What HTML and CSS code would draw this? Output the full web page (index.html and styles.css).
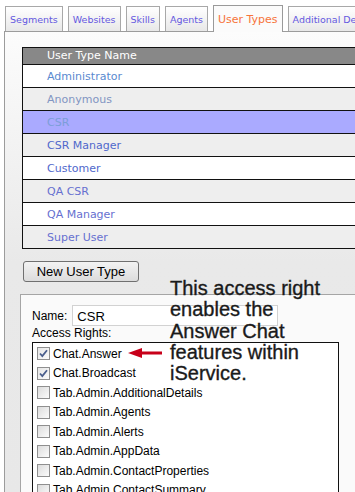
FILE: index.html
```html
<!DOCTYPE html>
<html>
<head>
<meta charset="utf-8">
<link rel="stylesheet" href="styles.css">
</head>
<body>
<div class="page">
  <ul class="tabs">
    <li class="tab">Segments</li>
    <li class="tab">Websites</li>
    <li class="tab">Skills</li>
    <li class="tab">Agents</li>
    <li class="tab tab-active">User Types</li>
    <li class="tab">Additional Details</li>
  </ul>
  <div class="panel">
    <div class="grid">
      <div class="grid-head">User Type Name</div>
      <div class="grid-row row-light"><span class="lnk lnk-a">Administrator</span></div>
      <div class="grid-row row-alt"><span class="lnk lnk-b">Anonymous</span></div>
      <div class="grid-row row-sel"><span class="lnk lnk-c">CSR</span></div>
      <div class="grid-row row-alt"><span class="lnk">CSR Manager</span></div>
      <div class="grid-row row-light"><span class="lnk">Customer</span></div>
      <div class="grid-row row-alt"><span class="lnk lnk-d">QA CSR</span></div>
      <div class="grid-row row-light"><span class="lnk lnk-d">QA Manager</span></div>
      <div class="grid-row row-alt row-last"><span class="lnk lnk-d">Super User</span></div>
    </div>
    <button class="btn">New User Type</button>
    <div class="editor">
      <div class="name-row">
        <label class="field-label">Name:</label>
        <input class="name-input" type="text" value="CSR">
      </div>
      <div class="field-label rights-label">Access Rights:</div>
      <ul class="rights">
        <li class="right"><span class="cb cb-on"><svg viewBox="0 0 11 11" width="11" height="11"><path d="M2 5.5 L4.3 8 L9 2.2" fill="none" stroke="#4a5e8c" stroke-width="1.8"/></svg></span>Chat.Answer</li>
        <li class="right"><span class="cb cb-on"><svg viewBox="0 0 11 11" width="11" height="11"><path d="M2 5.5 L4.3 8 L9 2.2" fill="none" stroke="#4a5e8c" stroke-width="1.8"/></svg></span>Chat.Broadcast</li>
        <li class="right"><span class="cb"></span>Tab.Admin.AdditionalDetails</li>
        <li class="right"><span class="cb"></span>Tab.Admin.Agents</li>
        <li class="right"><span class="cb"></span>Tab.Admin.Alerts</li>
        <li class="right"><span class="cb"></span>Tab.Admin.AppData</li>
        <li class="right"><span class="cb"></span>Tab.Admin.ContactProperties</li>
        <li class="right"><span class="cb"></span>Tab.Admin.ContactSummary</li>
      </ul>
    </div>
  </div>
  <div class="callout">This access right enables the Answer Chat features within iService.</div>
  <svg class="arrow" viewBox="0 0 36 12" width="36" height="12"><polygon points="1,6 15,1 15,11" fill="#c8001a"/><rect x="14" y="4.5" width="21" height="3" fill="#c8001a"/></svg>
</div>
</body>
</html>
```

FILE: styles.css
```css
html, body {
  margin: 0;
  padding: 0;
  background: #ffffff;
  overflow: hidden;
}
.page {
  position: relative;
  width: 355px;
  height: 492px;
  overflow: hidden;
  padding-left: 4px;
  box-sizing: border-box;
  font-family: "Liberation Sans", Arial, sans-serif;
}
.tabs {
  list-style: none;
  margin: 5px 0 0 0;
  padding: 0 0 0 1px;
  display: flex;
  align-items: flex-end;
  gap: 5px;
  width: 500px;
}
.tab {
  box-sizing: border-box;
  height: 25px;
  padding: 0 4px;
  border: 1px solid #a8a8a8;
  border-bottom: none;
  background: linear-gradient(#ffffff, #e8e8e8);
  font-family: "DejaVu Sans", Verdana, sans-serif;
  font-size: 9.5px;
  color: #6458e0;
  display: flex;
  align-items: center;
  white-space: nowrap;
}
.tab-active {
  position: relative;
  z-index: 1;
  height: 27px;
  margin-bottom: -1px;
  background: #fbfbfb;
  border-color: #9a9a9a;
  font-size: 11px;
  color: #f7743a;
}
.panel {
  border-top: 1px solid #9c9c9c;
  border-left: 1px solid #9c9c9c;
  width: 420px;
  height: 470px;
  background: linear-gradient(#fcfcfc 0, #e9e9e9 230px, #e8e8e8 100%);
  padding-top: 15px;
  box-sizing: border-box;
}
.grid {
  margin-left: 17px;
  width: 400px;
  border: 1px solid #111;
  border-right: none;
  font-family: "DejaVu Sans", Verdana, sans-serif;
  font-size: 11px;
}
.grid-head {
  height: 16px;
  line-height: 16px;
  background: #888888;
  color: #ffffff;
  padding-left: 24px;
  border-bottom: 1px solid #111;
}
.grid-row {
  height: 22px;
  line-height: 23px;
  padding-left: 24px;
  border-bottom: 1px solid #111;
}
.row-last {
  border-bottom: none;
}
.row-light { background: #ffffff; }
.row-alt { background: #eeeeee; }
.row-sel { background: #aaaaff; }
.lnk { color: #5068cc; }
.lnk-a { color: #5a8ad0; }
.lnk-b { color: #8195c2; }
.lnk-c { color: #7c9ed8; }
.lnk-d { color: #6670d0; }
.btn {
  display: block;
  margin: 12px 0 0 18px;
  width: 116px;
  height: 21px;
  padding: 0;
  border: 1px solid #707070;
  border-radius: 3px;
  background: linear-gradient(#f3f3f3, #dcdcdc);
  font-family: "Liberation Sans", Arial, sans-serif;
  font-size: 13px;
  color: #000;
}
.editor {
  margin: 12px 0 0 15px;
  border: 1px solid #a5a5a5;
  background: #fafafa;
  padding: 10px 0 0 11px;
  height: 300px;
}
.name-row {
  display: flex;
  align-items: center;
  gap: 5px;
}
.field-label {
  font-size: 12px;
  color: #000;
  line-height: 14px;
}
.name-input {
  box-sizing: border-box;
  width: 206px;
  height: 21px;
  margin: 0;
  border: 1px solid #d2d2d2;
  background: #ffffff;
  padding: 1px 0 0 4px;
  font-family: "Liberation Sans", Arial, sans-serif;
  font-size: 13px;
  color: #000;
  outline: none;
}
.rights-label {
  margin-top: 0;
}
.rights {
  list-style: none;
  margin: 2px 0 0 0;
  padding: 1px 0 0 4px;
  width: 301px;
  height: 200px;
  border: 1px solid #111;
  background: #ffffff;
}
.right {
  height: 19.5px;
  display: flex;
  align-items: center;
  font-size: 12px;
  color: #000;
  white-space: nowrap;
}
.cb {
  box-sizing: border-box;
  width: 13px;
  height: 13px;
  margin-right: 3px;
  border: 1px solid #8f8f8f;
  background: linear-gradient(135deg, #dcdcdc, #fbfbfb);
  display: flex;
  align-items: center;
  justify-content: center;
  flex: none;
}
.cb-on {
  background: linear-gradient(135deg, #e6e6e6, #fafafa);
}
.callout {
  position: absolute;
  left: 170px;
  top: 278px;
  width: 165px;
  font-family: "Liberation Sans", Arial, sans-serif;
  font-size: 20px;
  line-height: 21.25px;
  color: #1a1a1a;
  -webkit-text-stroke: 0.35px #1a1a1a;
}
.arrow {
  position: absolute;
  left: 127px;
  top: 347px;
}
```
